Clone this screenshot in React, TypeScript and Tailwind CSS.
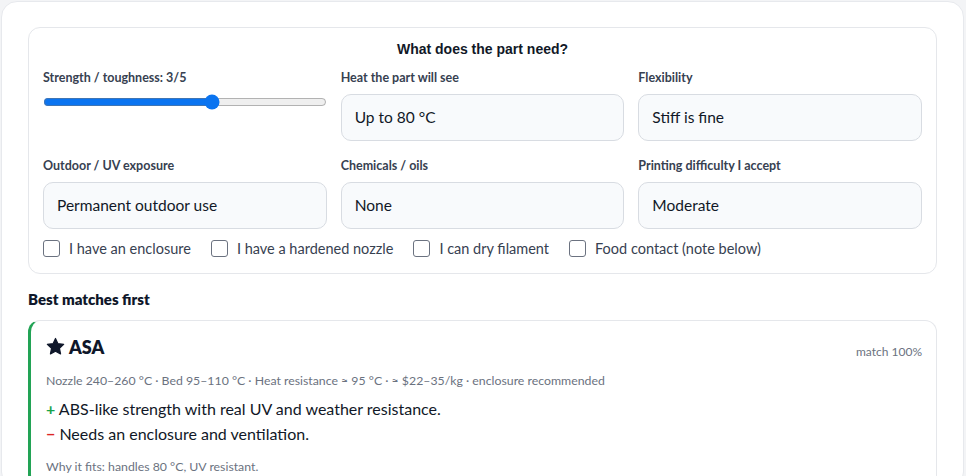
import { useState } from "react";

const font = { fontFamily: "Lato, 'Noto Sans', sans-serif" };

function Field({ label, value }: { label: string; value: string }) {
  return (
    <div className="flex flex-col">
      <label className="text-[12.5px] font-bold text-[#374151] leading-[18px] mb-[7px]">{label}</label>
      <div className="h-[47px] rounded-[10px] border border-[#d8dce2] bg-[#f8fafc] px-[13px] flex items-center text-[15.5px] text-[#111827]">
        {value}
      </div>
    </div>
  );
}

function Check({ label }: { label: string }) {
  const [on, setOn] = useState(false);
  return (
    <label className="flex items-center gap-[9px] text-[14.5px] text-[#374151] cursor-pointer">
      <input
        type="checkbox"
        checked={on}
        onChange={() => setOn(!on)}
        className="appearance-none w-[17px] h-[17px] rounded-[3px] border border-[#6b7280] bg-white checked:bg-[#0b74f0] checked:border-[#0b74f0]"
      />
      {label}
    </label>
  );
}

function Star() {
  return (
    <svg width="19" height="19" viewBox="0 0 24 24" fill="#0f172a">
      <path d="M12 1.8l3.1 6.6 7.2.9-5.3 5 1.4 7.1L12 17.9l-6.4 3.5 1.4-7.1-5.3-5 7.2-.9z" strokeLinejoin="round" stroke="#0f172a" strokeWidth="1.5" />
    </svg>
  );
}

export default function App() {
  const [strength, setStrength] = useState(3);

  return (
    <div className="min-h-screen bg-[#f3f4f6] pl-[1px] pt-[1px]" style={font}>
      <div className="w-[963px] min-h-[480px] bg-white border border-[#e7e9ed] rounded-[16px] px-[26px] pt-[25px]">
        {/* requirements form */}
        <div className="border border-[#e5e7eb] rounded-[12px] px-[14px] pt-[11px] pb-[13px]">
          <h2 className="text-center text-[14px] font-bold text-[#111827] leading-[20px] mb-[10px]" style={{ fontFamily: "'Liberation Sans', Arial, sans-serif" }}>
            What does the part need?
          </h2>
          <div className="grid grid-cols-3 gap-x-[14px] gap-y-[16px]">
            <div className="flex flex-col">
              <label className="text-[12.5px] font-bold text-[#374151] leading-[18px] mb-[7px]">
                Strength / toughness: {strength}/5
              </label>
              <input
                type="range"
                min={0}
                max={5}
                value={strength}
                onChange={(e) => setStrength(Number(e.target.value))}
                className="w-full accent-[#0b74f0] m-0"
              />
            </div>
            <Field label="Heat the part will see" value="Up to 80 °C" />
            <Field label="Flexibility" value="Stiff is fine" />
            <Field label="Outdoor / UV exposure" value="Permanent outdoor use" />
            <Field label="Chemicals / oils" value="None" />
            <Field label="Printing difficulty I accept" value="Moderate" />
          </div>
          <div className="flex items-center gap-[20px] mt-[9px]">
            <Check label="I have an enclosure" />
            <Check label="I have a hardened nozzle" />
            <Check label="I can dry filament" />
            <Check label="Food contact (note below)" />
          </div>
        </div>

        {/* results */}
        <h3 className="text-[15px] font-extrabold text-[#0f172a] mt-[15px] mb-[11px] leading-[20px]">Best matches first</h3>
        <div className="border border-[#e5e7eb] border-l-[3px] border-l-[#22a355] rounded-[12px] pl-[15px] pr-[14px] pt-[14px] pb-[10px]">
          <div className="flex items-start justify-between">
            <div className="flex items-center gap-[4px] text-[18px] font-extrabold text-[#0f172a] leading-[24px]">
              <Star />
              ASA
            </div>
            <span className="text-[12px] text-[#6b7280] mt-[8px]">match 100%</span>
          </div>
          <p className="text-[12.3px] text-[#6b7280] mt-[11px] leading-[18px]">
            Nozzle 240–260 °C · Bed 95–110 °C · Heat resistance ≈ 95 °C · ≈ $22–35/kg · enclosure recommended
          </p>
          <ul className="mt-[6px] text-[16px] text-[#111827] leading-[25px]">
            <li>
              <span className="text-[#16a34a] font-bold">+</span> ABS-like strength with real UV and weather resistance.
            </li>
            <li>
              <span className="text-[#dc2626] font-bold">−</span> Needs an enclosure and ventilation.
            </li>
          </ul>
          <p className="text-[12.3px] text-[#6b7280] mt-[12px] leading-[18px]">Why it fits: handles 80 °C, UV resistant.</p>
        </div>
      </div>
    </div>
  );
}
